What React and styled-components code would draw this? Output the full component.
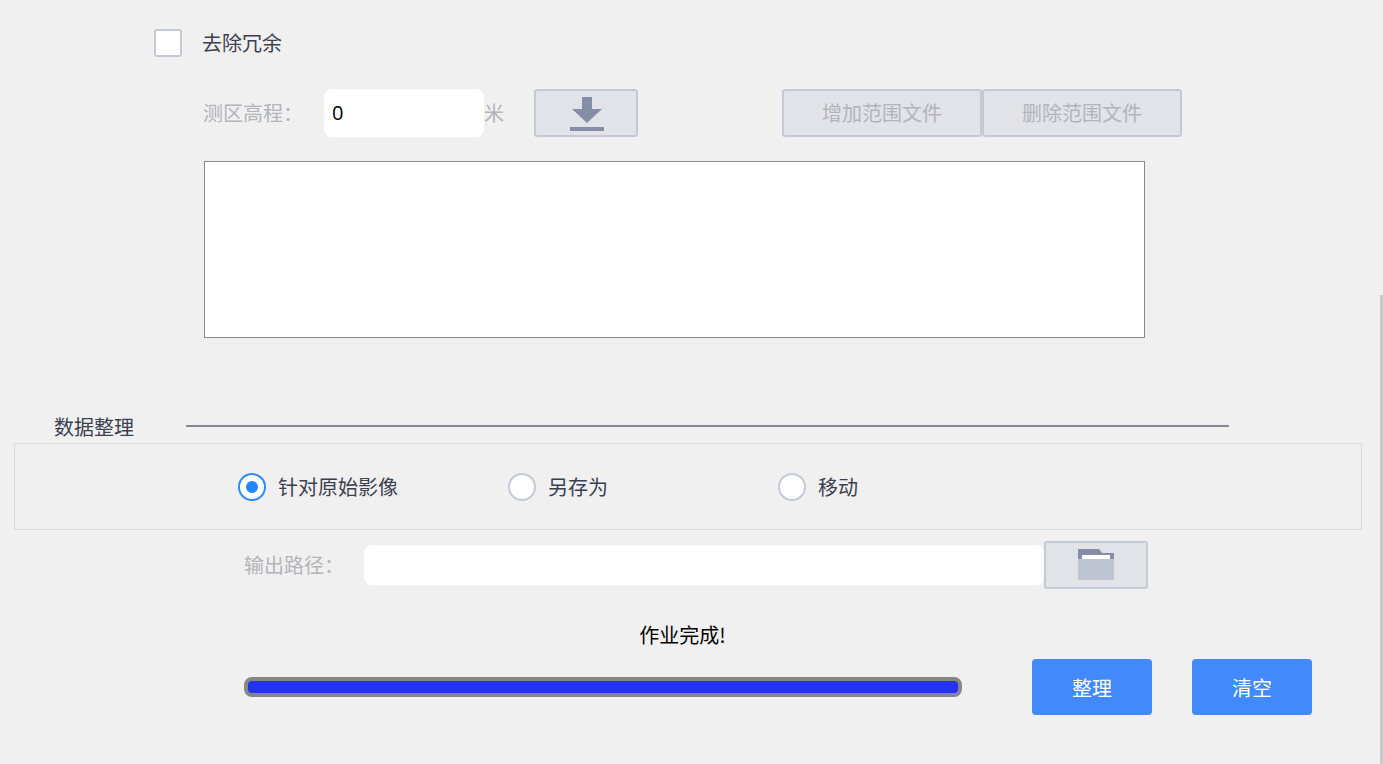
import React from "react";
import styled, { createGlobalStyle } from "styled-components";

const Global = createGlobalStyle`
  html, body { margin: 0; padding: 0; background: #f0f0f0; overflow: hidden; }
  * { box-sizing: border-box; }
`;

const Page = styled.div`
  position: relative;
  width: 1383px;
  height: 764px;
  overflow: hidden;
  background: #f0f0f0;
  font-family: "Noto Sans CJK SC", "Liberation Sans", sans-serif;
  font-size: 20px;
  color: #3c4150;
  padding-top: 29px;
`;

const ScrollThumb = styled.div`
  position: absolute;
  right: 0;
  top: 295px;
  width: 3px;
  bottom: 0;
  background: #c8c8c8;
`;

const CheckRow = styled.label`
  display: flex;
  align-items: center;
  gap: 20px;
  height: 28px;
  margin-left: 154px;
`;

const CheckText = styled.span`
  padding-bottom: 2px;
`;

const Checkbox = styled.span`
  width: 28px;
  height: 28px;
  background: #fff;
  border: 2px solid #c4c9d8;
  border-radius: 3px;
`;

const HeightRow = styled.div`
  display: flex;
  align-items: center;
  height: 48px;
  margin: 32px 0 0 203px;
`;

const FieldLabel = styled.span`
  width: ${(p) => p.$width}px;
  padding-bottom: 2px;
  color: #b2b4ba;
  white-space: nowrap;
`;

const TextInput = styled.div`
  width: ${(p) => p.$width}px;
  height: ${(p) => p.$height}px;
  background: #fff;
  border-radius: 8px;
  padding-left: 8px;
  color: #000;
  font-family: "Open Sans", sans-serif;
  line-height: ${(p) => p.$height}px;
`;

const IconButton = styled.button`
  width: 104px;
  height: 48px;
  padding: 0;
  display: flex;
  align-items: center;
  justify-content: center;
  background: #e1e3e8;
  border: 2px solid #c4c9d8;
  border-radius: 3px;
`;

const FileButton = styled.button`
  width: 200px;
  height: 48px;
  padding: 0 0 2px;
  background: #e1e3e8;
  border: 2px solid #c4c9d8;
  border-radius: 3px;
  color: #b2b4ba;
  font: inherit;
`;

const FileButtons = styled.div`
  display: flex;
  margin-left: 144px;
`;

const Unit = styled.span`
  width: 50px;
  padding-bottom: 2px;
  color: #b2b4ba;
`;

const ListBox = styled.div`
  width: 941px;
  height: 177px;
  margin: 24px 0 0 204px;
  background: #fff;
  border: 1px solid #868791;
`;

const SectionHead = styled.div`
  display: flex;
  align-items: center;
  height: 30px;
  margin: 73px 0 0 54px;
`;

const SectionTitle = styled.span`
  width: 132px;
`;

const SectionLine = styled.div`
  width: 1043px;
  height: 2px;
  background: #868791;
`;

const RadioPanel = styled.div`
  display: flex;
  align-items: center;
  width: 1348px;
  height: 87px;
  margin: 2px 0 0 14px;
  padding-left: 223px;
  border: 1px solid #dcdcdc;
`;

const RadioItem = styled.label`
  display: flex;
  align-items: center;
  gap: 12px;
  width: 270px;
`;

const RadioDot = styled.span`
  width: 28px;
  height: 28px;
  flex: none;
  border-radius: 50%;
  background: #fff;
  border: 2px solid ${(p) => (p.$on ? "#2e8bff" : "#c4c9d8")};
  display: flex;
  align-items: center;
  justify-content: center;
  &::after {
    content: "";
    display: ${(p) => (p.$on ? "block" : "none")};
    width: 12px;
    height: 12px;
    border-radius: 50%;
    background: #2087ff;
  }
`;

const OutputRow = styled.div`
  display: flex;
  align-items: center;
  height: 48px;
  margin: 11px 0 0 244px;
`;

const Status = styled.div`
  width: 1365px;
  height: 30px;
  margin-top: 31px;
  text-align: center;
  line-height: 30px;
  color: #000;
`;

const ActionRow = styled.div`
  display: flex;
  align-items: center;
  height: 56px;
  margin: 9px 0 0 244px;
`;

const Progress = styled.div`
  width: 718px;
  height: 20px;
  border: 4px solid #868686;
  border-radius: 8px;
  background: #2233ee;
  overflow: hidden;
`;

const ActionButton = styled.button`
  width: 120px;
  height: 56px;
  margin-left: ${(p) => p.$ml}px;
  padding: 0;
  border: 0;
  border-radius: 4px;
  background: #4289fb;
  color: #fff;
  font: inherit;
`;

const DownloadIcon = () => (
  <svg width="36" height="36" viewBox="0 0 36 36" fill="#868da6">
    <path d="M14 2h10v12h10L19 28 4 14h10z" />
    <rect x="2" y="32" width="34" height="4" />
  </svg>
);

const FolderIcon = () => (
  <svg width="36" height="32" viewBox="0 0 36 32">
    <path d="M0 0h21l3 4h12v8H0z" fill="#868da6" />
    <rect x="4" y="6" width="28" height="6" fill="#fff" />
    <path d="M0 10h36v20l-1 1H1l-1-1z" fill="#bfc5d3" />
  </svg>
);

export default function App() {
  return (
    <Page>
      <Global />
      <CheckRow>
        <Checkbox />
        <CheckText>去除冗余</CheckText>
      </CheckRow>
      <HeightRow>
        <FieldLabel $width={121}>测区高程：</FieldLabel>
        <TextInput $width={160} $height={48}>0</TextInput>
        <Unit>米</Unit>
        <IconButton><DownloadIcon /></IconButton>
        <FileButtons>
          <FileButton>增加范围文件</FileButton>
          <FileButton>删除范围文件</FileButton>
        </FileButtons>
      </HeightRow>
      <ListBox />
      <SectionHead>
        <SectionTitle>数据整理</SectionTitle>
        <SectionLine />
      </SectionHead>
      <RadioPanel>
        <RadioItem><RadioDot $on /><span>针对原始影像</span></RadioItem>
        <RadioItem><RadioDot /><span>另存为</span></RadioItem>
        <RadioItem><RadioDot /><span>移动</span></RadioItem>
      </RadioPanel>
      <OutputRow>
        <FieldLabel $width={120}>输出路径：</FieldLabel>
        <TextInput $width={680} $height={40} />
        <IconButton><FolderIcon /></IconButton>
      </OutputRow>
      <Status>作业完成!</Status>
      <ActionRow>
        <Progress />
        <ActionButton $ml={70}>整理</ActionButton>
        <ActionButton $ml={40}>清空</ActionButton>
      </ActionRow>
      <ScrollThumb />
    </Page>
  );
}
